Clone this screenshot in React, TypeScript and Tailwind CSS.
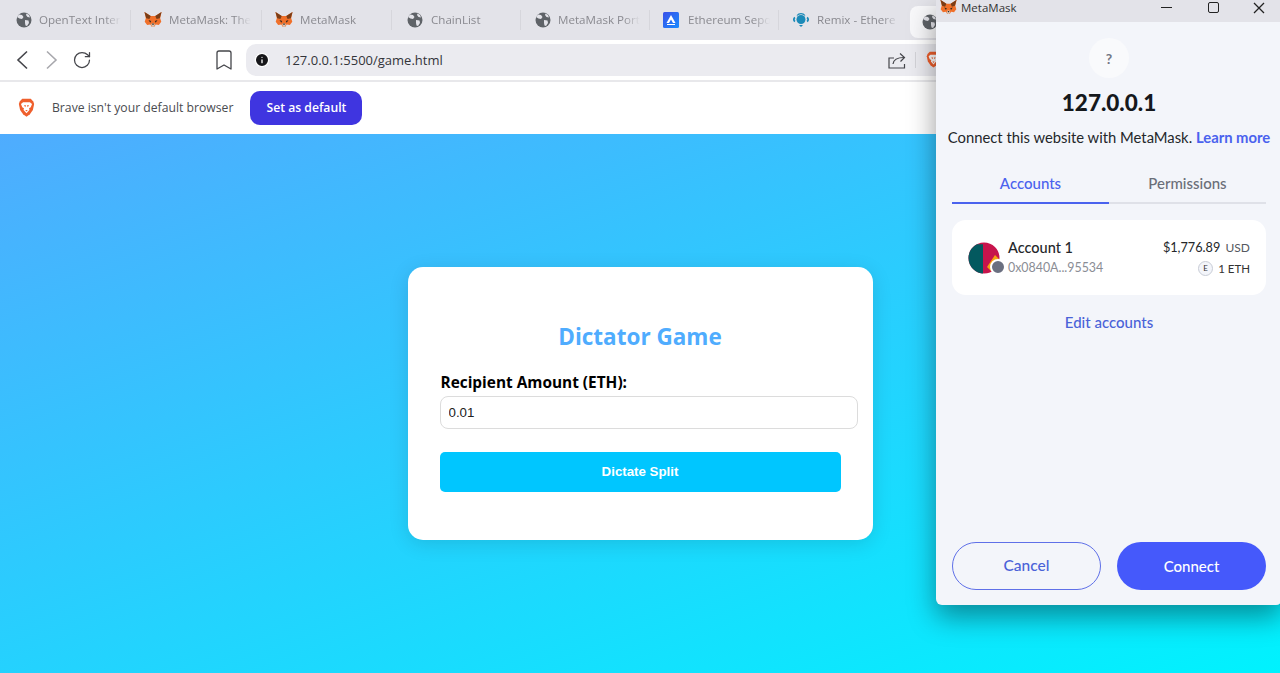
import { Bookmark, Info, RotateCw } from 'lucide-react';

const Fox = ({ size = 18 }: { size?: number }) => (
  <svg width={size} height={size} viewBox="0 0 20 20" className="shrink-0">
    <path d="M0.500 1l7 4.500h5L19.500 1 18 8l1.200 4-2.700 3.500-3.500-.5-1.500 2.500H8.500L7 15l-3.500.5L.800 12 2 8z" fill="#f0702a" />
    <path d="M.5 1l7 4.500L6 9 2.500 8zM19.500 1l-7 4.500L14 9l3.500-1z" fill="#7a3d17" />
    <path d="M5 10l3 1-1 2zM15 10l-3 1 1 2z" fill="#33281f" />
    <path d="M8 15l1-1.500h2l1 1.500-1 2.500H9z" fill="#d8c8bb" />
    <path d="M9 14h2l-.5 1.500h-1z" fill="#33281f" />
  </svg>
);

const Globe = () => (
  <svg width="16" height="16" viewBox="0 0 16 16" className="shrink-0">
    <circle cx="8" cy="8" r="7.500" fill="#5f6368" />
    <path d="M3 2.500l3 .5 1.500 2L6 7 3.500 6.500 1 5zM9 8l3.500.5.500 2.500-2 3-1.500-.5L9 11zM10.500 1.500L13 3l1 2.500-2.500-.5-1.500-2z" fill="#e3e3e9" />
  </svg>
);

const BraveLion = ({ size = 18 }: { size?: number }) => (
  <svg width={size} height={size * 1.15} viewBox="0 0 20 23" className="shrink-0">
    <path d="M5 1h10l3 3 1 3-1.500 7-3.500 5-4 3-4-3-3.500-5L1 7l1-3z" fill="#ef5f2c" />
    <path d="M6 5h8l2.500 2-1.500 4-2 1 .5 2-3.500 4-3.500-4 .5-2-2-1-1.500-4z" fill="#fff" />
    <path d="M7 8.500h2.500L8.500 11zM13 8.500h-2.500l1 2.500zM8.500 14h3L10 16z" fill="#ef5f2c" />
  </svg>
);

const EthereumTabIcon = () => (
  <svg width="16" height="16" viewBox="0 0 16 16" className="shrink-0">
    <defs>
      <linearGradient id="sepolia" x1="0" y1="0" x2="1" y2="1">
        <stop offset="0" stopColor="#3a4fe8" />
        <stop offset="1" stopColor="#1a8cff" />
      </linearGradient>
    </defs>
    <rect width="16" height="16" rx="1.500" fill="url(#sepolia)" />
    <path d="M8 3l4.500 8H10L8 7.500 6 11H3.500z" fill="#fff" />
    <path d="M4 12h8v1H4z" fill="#fff" />
  </svg>
);

const RemixIcon = () => (
  <svg width="16" height="16" viewBox="0 0 16 16" className="shrink-0">
    <circle cx="8" cy="7.500" r="4.500" fill="#1b8ab8" />
    <path d="M2 5.500C.5 6.500.5 8.500 2 9.500M14 5.500c1.500 1 1.500 3 0 4" stroke="#1b8ab8" strokeWidth="1.800" fill="none" />
    <path d="M4 3.500C6 1 10 1 12 3.500" stroke="#1b8ab8" strokeWidth="1.200" fill="none" />
    <path d="M6 13h4l-2 2z" fill="#1b8ab8" />
  </svg>
);

const ShareIcon = () => (
  <svg width="18" height="17" viewBox="0 0 18 17" fill="none" stroke="#44454a" strokeWidth="1.200" className="shrink-0">
    <path d="M6 6H1v10h15.500v-4" />
    <path d="M5 12c.5-4 4-6.500 11-6.500" />
    <path d="M12 1.500l4.500 4-4 4" />
  </svg>
);

const tabs = [
  { title: 'OpenText Inter', icon: <Globe />, cls: 'w-[131px] pl-4 gap-[7px]' },
  { title: 'MetaMask: The', icon: <Fox />, cls: 'w-[131px] pl-[13px] gap-[7px]' },
  { title: 'MetaMask', icon: <Fox />, cls: 'w-[130px] pl-[13px] gap-[7px]' },
  { title: 'ChainList', icon: <Globe />, cls: 'w-[129px] pl-[15px] gap-2' },
  { title: 'MetaMask Port', icon: <Globe />, cls: 'w-[129px] pl-[14px] gap-[7px]' },
  { title: 'Ethereum Sepo', icon: <EthereumTabIcon />, cls: 'w-[129px] pl-[13px] gap-[9px]' },
  { title: 'Remix - Ethere', icon: <RemixIcon />, cls: 'w-[130px] pl-[14px] gap-2' },
];

export default function App() {
  return (
    <div className="relative h-[673px] w-[1280px] overflow-hidden bg-white font-['Open_Sans',sans-serif]">
      {/* tab strip */}
      <div className="flex h-10 items-center bg-[#e3e3e9]">
        {tabs.map((tab, i) => (
          <div key={i} className={`flex h-5 items-center ${tab.cls} ${i < 6 ? 'border-r border-[#d6d6dc]' : ''}`}>
            {tab.icon}
            <span className="w-[82px] whitespace-nowrap text-[11.600px] text-[#8a8a90] [mask-image:linear-gradient(to_right,black_80%,transparent)]">
              {tab.title}
            </span>
          </div>
        ))}
        <div className="mt-[4px] ml-[1px] flex h-[32px] flex-1 items-center rounded-[8px] bg-[#f8f8fa] pl-3">
          <Globe />
        </div>
      </div>

      {/* toolbar */}
      <div className="flex h-10 items-center bg-white pl-4">
        <svg width="12" height="20" viewBox="0 0 12 20" fill="none" stroke="#44454a" strokeWidth="1.600" className="shrink-0">
          <path d="M11 1.500L2 10l9 8.500" />
        </svg>
        <svg width="12" height="20" viewBox="0 0 12 20" fill="none" stroke="#a8a8ad" strokeWidth="1.600" className="ml-[18px] shrink-0">
          <path d="M1 1.500l9 8.500-9 8.500" />
        </svg>
        <RotateCw className="ml-[14px] h-[20px] w-[20px] text-[#44454a]" strokeWidth={1.500} />
        <Bookmark className="ml-[120px] h-6 w-6 text-[#44454a]" strokeWidth={1.300} />
        <div className="ml-[10px] flex h-8 w-[700px] items-center rounded-l-[10px] bg-[#ebebf0] pr-[5px] pl-[8px]">
          <Info className="h-4 w-4 fill-[#17171a] text-white" strokeWidth={2} />
          <span className="mt-px ml-[15px] text-[13px] text-[#33343a]">127.0.0.1:5500/game.html</span>
          <div className="mr-[9px] ml-auto"><ShareIcon /></div>
          <div className="mr-[10px] h-4 w-px bg-[#d2d2d8]" />
          <BraveLion size={15} />
        </div>
      </div>
      <div className="h-[2px] bg-[#e8e8eb]" />

      {/* default browser bar */}
      <div className="flex h-[52px] items-center bg-white pl-[18px]">
        <BraveLion size={17} />
        <span className="mt-px ml-[17px] text-[12.200px] text-[#4a4b50]">Brave isn't your default browser</span>
        <button className="ml-[17px] h-[34px] w-[112px] rounded-[10px] bg-[#3f35e0] pt-px text-[12.200px] font-semibold text-white">
          Set as default
        </button>
      </div>

      {/* page */}
      <div className="flex h-[539px] justify-center bg-[linear-gradient(160deg,#4facfe_0%,#00f2fe_100%)] pt-[133px]">
        <div className="h-[273px] w-[465px] rounded-[15px] bg-white px-[32px] pt-[53px] shadow-[0_4px_20px_rgba(0,0,0,0.12)]">
          <h1 className="text-center text-[22.500px] leading-[34px] font-bold text-[#4facfe]">Dictator Game</h1>
          <label className="mt-[18px] block pl-px text-[15.400px] leading-[22px] font-bold text-black">Recipient Amount (ETH):</label>
          <input
            readOnly
            value="0.01"
            className="mt-[2px] block h-[33px] w-[418px] rounded-[8px] border border-[#dcdcdc] px-2 font-['Liberation_Sans',sans-serif] text-[13.300px] text-[#222]"
          />
          <button className="mt-[23px] h-[40px] w-[401px] rounded-[5px] bg-[#00c6ff] font-['Liberation_Sans',sans-serif] text-[13.300px] font-bold text-white">
            Dictate Split
          </button>
        </div>
      </div>

      {/* metamask popup window */}
      <div className="absolute top-0 right-[-2px] flex h-[605px] w-[346px] flex-col rounded-b-[6px] bg-[#f3f5fa] font-['Lato',sans-serif] shadow-[0_12px_28px_rgba(0,0,0,0.4)]">
        <div className="flex h-[22px] shrink-0 items-center bg-[#e3e3e9] pb-[7px] pl-[4px]">
          <Fox size={17} />
          <span className="ml-[4px] font-['Open_Sans',sans-serif] text-[11.500px] text-[#333]">MetaMask</span>
          <div className="ml-auto h-[1.500px] w-[11px] bg-[#222]" />
          <div className="ml-[36px] h-[11px] w-[11px] rounded-[2px] border-[1.500px] border-[#222]" />
          <svg width="12" height="12" viewBox="0 0 12 12" stroke="#222" strokeWidth="1.300" className="mr-[17px] ml-[34px]">
            <path d="M1 1l10 10M11 1L1 11" />
          </svg>
        </div>

        <div className="mx-auto mt-4 flex h-10 w-10 items-center justify-center rounded-full bg-[#f9fafc] text-[14px] font-bold text-[#737785]">
          ?
        </div>
        <div className="mt-[6px] text-center text-[22.500px] leading-[38px] font-black text-[#15181c]">127.0.0.1</div>
        <p className="mt-[5px] text-center text-[14.800px] leading-[20px] whitespace-nowrap text-[#24272a]">
          Connect this website with MetaMask. <span className="font-bold text-[#4a62ee]">Learn more</span>
        </p>

        <div className="mx-4 mt-[26px] flex h-[20px] text-[15px] leading-[20px]">
          <div className="w-1/2 text-center font-medium text-[#4a62ee]">Accounts</div>
          <div className="w-1/2 text-center font-medium text-[#6a6e78]">Permissions</div>
        </div>
        <div className="mx-4 mt-[9px] flex h-[2px]">
          <div className="w-1/2 bg-[#4a62ee]" />
          <div className="w-1/2 bg-[#dfe1e8]" />
        </div>

        <div className="mx-4 mt-4 flex h-[75px] items-center rounded-[14px] bg-white pr-4 pl-4">
          <div className="relative h-[32px] w-[32px] shrink-0">
            <svg width="32" height="32" viewBox="0 0 32 32">
              <circle cx="16" cy="16" r="15.500" fill="#c7144c" />
              <path d="M16 31.500A15.500 15.500 0 0 1 .5 16 15.500 15.500 0 0 1 9 2.200h6v29.300z" fill="#03595f" />
              <path d="M19 25l8-12 4 4-2 9-6 3z" fill="#f5a312" />
            </svg>
            <div className="absolute right-[-6px] bottom-[-1px] h-4 w-4 rounded-full border-2 border-white bg-[#6a6f80]" />
          </div>
          <div className="ml-2 pt-px">
            <div className="text-[14.500px] leading-[20px] font-medium text-[#24272a]">Account 1</div>
            <div className="text-[12.400px] leading-[20px] text-[#8a8d95]">0x0840A...95534</div>
          </div>
          <div className="ml-auto pt-px text-right">
            <div className="text-[12.700px] leading-[20px] text-[#24272a]">
              $1,776.89 <span className="ml-[2px] text-[12px] text-[#555860]">USD</span>
            </div>
            <div className="flex items-center justify-end gap-[5px] text-[11.500px] leading-[21px] text-[#333]">
              <span className="flex h-[15px] w-[15px] items-center justify-center rounded-full border border-[#c8ccd6] bg-[#f3f5fa] text-[8px]">
                E
              </span>
              1 ETH
            </div>
          </div>
        </div>

        <div className="mt-[17px] text-center text-[15px] leading-[20px] font-medium text-[#4a62d8]">Edit accounts</div>

        <div className="mx-4 mt-auto mb-[15px] flex gap-4">
          <button className="h-12 w-[149px] rounded-full border border-[#5f70e8] text-[15.500px] font-medium text-[#4a62d8]">Cancel</button>
          <button className="h-12 w-[149px] rounded-full bg-[#4559fb] text-[15px] font-medium text-white">Connect</button>
        </div>
      </div>
    </div>
  );
}
